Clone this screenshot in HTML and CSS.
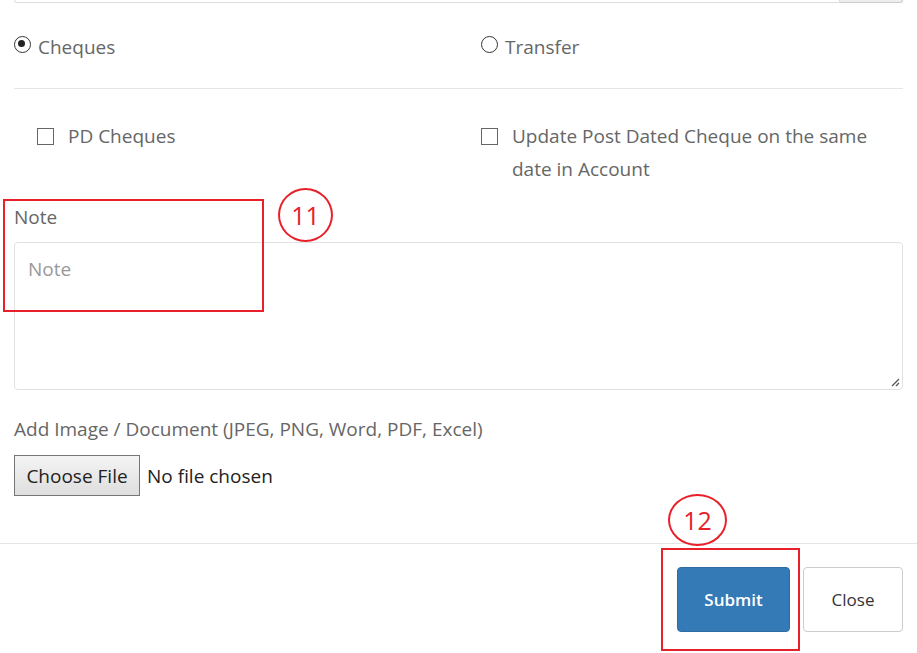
FILE: index.html
```html
<!DOCTYPE html>
<html>
<head>
<meta charset="utf-8">
<link rel="stylesheet" href="styles.css">
</head>
<body>
<div class="modal">
  <div class="modal-body">
    <div class="top-input"><div class="top-field"></div><div class="top-addon"></div></div>

    <div class="radio-row">
      <label class="opt"><span class="radio checked"></span><span>Cheques</span></label>
      <label class="opt"><span class="radio"></span><span>Transfer</span></label>
    </div>

    <div class="divider"></div>

    <div class="check-row">
      <label class="chk chk-left"><span class="box"></span><span>PD Cheques</span></label>
      <label class="chk chk-right"><span class="box"></span><span class="chk-text">Update Post Dated Cheque on the same date in Account</span></label>
    </div>

    <div class="field-label note-label">Note</div>
    <div class="textarea"><span class="placeholder">Note</span><svg class="grip" width="10" height="10" viewBox="0 0 10 10"><path d="M9 2 L2 9 M9 6 L6 9" stroke="#555" stroke-width="1.3"/></svg></div>

    <div class="field-label file-label">Add Image / Document (JPEG, PNG, Word, PDF, Excel)</div>
    <div class="file-row"><span class="file-btn">Choose File</span><span class="file-name">No file chosen</span></div>
  </div>
  <div class="modal-footer">
    <span class="btn btn-primary">Submit</span>
    <span class="btn btn-default">Close</span>
  </div>

  <div class="anno-box box-11"></div>
  <div class="anno-circle c-11">11</div>
  <div class="anno-box box-12"></div>
  <div class="anno-circle c-12">12</div>
</div>
</body>
</html>
```
FILE: styles.css
```css
html, body {
  margin: 0;
  padding: 0;
  background: #fff;
  overflow: hidden;
}
body {
  font-family: "Open Sans", "Noto Sans", sans-serif;
  color: #666;
  width: 917px;
  height: 653px;
}
.modal {
  position: relative;
  width: 917px;
  height: 653px;
}
.modal-body {
  padding: 0 14px;
}
.top-input {
  display: flex;
  height: 3px;
}
.top-field {
  flex: 1;
  border: 1px solid #ddd;
  border-top: none;
  border-radius: 0 0 0 4px;
}
.top-addon {
  width: 62px;
  background: #eee;
  border: 1px solid #ccc;
  border-top: none;
  border-left: none;
  border-radius: 0 0 4px 0;
}
.radio-row {
  display: grid;
  grid-template-columns: 467px 1fr;
  padding-top: 33px;
  height: 30px;
}
.opt {
  display: flex;
  align-items: center;
  gap: 7px;
  font-size: 19px;
  height: 22px;
  line-height: 22px;
}
.radio {
  box-sizing: border-box;
  width: 17px;
  height: 17px;
  border: 1.6px solid #333;
  border-radius: 50%;
  position: relative;
  flex: none;
  margin-top: -6px;
}
.radio.checked::after {
  content: "";
  position: absolute;
  left: 3.4px;
  top: 3.4px;
  width: 7px;
  height: 7px;
  border-radius: 50%;
  background: #222;
}
.divider {
  height: 1px;
  background: #e5e5e5;
  margin-top: 22px;
}
.check-row {
  display: grid;
  grid-template-columns: 467px 1fr;
  padding-top: 31px;
}
.chk {
  display: flex;
  align-items: flex-start;
  gap: 14px;
  font-size: 19px;
  line-height: 33px;
}
.chk-left {
  padding-left: 23px;
}
.box {
  width: 15px;
  height: 15px;
  border: 1.5px solid #666;
  flex: none;
  margin-top: 8px;
}
.chk-text {
  width: 372px;
}
.field-label {
  font-size: 19px;
  line-height: 24px;
}
.note-label {
  margin-top: 19px;
}
.textarea {
  position: relative;
  margin-top: 13px;
  height: 146px;
  border: 1px solid #e2e2e2;
  border-radius: 4px;
  box-sizing: content-box;
}
.placeholder {
  position: absolute;
  left: 13px;
  top: 14px;
  font-size: 19px;
  color: #999;
  line-height: 24px;
}
.grip {
  position: absolute;
  right: 2px;
  bottom: 2px;
}
.file-label {
  margin-top: 27px;
}
.file-row {
  display: flex;
  align-items: center;
  margin-top: 14px;
  height: 41px;
}
.file-btn {
  box-sizing: border-box;
  height: 41px;
  width: 126px;
  border: 1px solid #767676;
  background: linear-gradient(#f4f4f4, #dedede);
  color: #222;
  font-size: 19px;
  display: flex;
  align-items: center;
  justify-content: center;
}
.file-name {
  color: #222;
  font-size: 19px;
  margin-left: 7px;
}
.modal-footer {
  margin-top: 47px;
  border-top: 1px solid #e5e5e5;
  display: flex;
  justify-content: flex-end;
  gap: 13px;
  padding: 23px 14px 0;
}
.btn {
  box-sizing: border-box;
  height: 65px;
  display: flex;
  align-items: center;
  justify-content: center;
  border-radius: 4px;
  font-size: 17px;
}
.btn-primary {
  width: 113px;
  background: #337ab7;
  border: 1px solid #2e6da4;
  color: #fff;
  font-weight: 600;
}
.btn-default {
  width: 100px;
  background: #fff;
  border: 1px solid #ccc;
  color: #333;
}
.anno-box {
  position: absolute;
  border: 2px solid #e8202a;
  box-sizing: border-box;
}
.box-11 {
  left: 3px;
  top: 199px;
  width: 261px;
  height: 113px;
}
.box-12 {
  left: 661px;
  top: 548px;
  width: 139px;
  height: 103px;
}
.anno-circle {
  position: absolute;
  border: 2px solid #e8202a;
  border-radius: 50%;
  box-sizing: border-box;
  color: #e8202a;
  font-size: 25px;
  display: flex;
  align-items: center;
  justify-content: center;
}
.c-11 {
  left: 278px;
  top: 188px;
  width: 55px;
  height: 54px;
}
.c-12 {
  left: 668px;
  top: 494px;
  width: 59px;
  height: 52px;
}
```
